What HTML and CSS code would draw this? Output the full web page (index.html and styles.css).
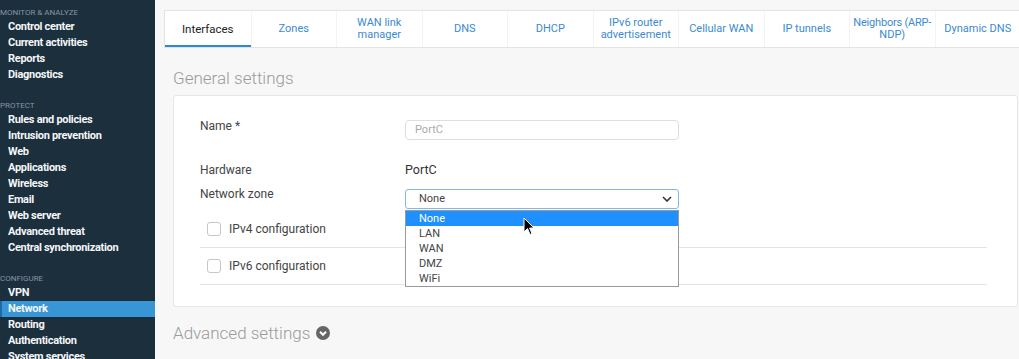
FILE: index.html
```html
<!DOCTYPE html>
<html lang="en">

<head>
    <meta charset="UTF-8">
    <title>Network - Interfaces</title>
    <link rel="stylesheet" href="styles.css">
</head>

<body>
    <nav class="sidebar">
        <div class="nav-group">
            <div class="nav-title">MONITOR &amp; ANALYZE</div>
            <a class="nav-item">Control center</a>
            <a class="nav-item">Current activities</a>
            <a class="nav-item">Reports</a>
            <a class="nav-item">Diagnostics</a>
        </div>
        <div class="nav-group">
            <div class="nav-title">PROTECT</div>
            <a class="nav-item">Rules and policies</a>
            <a class="nav-item">Intrusion prevention</a>
            <a class="nav-item">Web</a>
            <a class="nav-item">Applications</a>
            <a class="nav-item">Wireless</a>
            <a class="nav-item">Email</a>
            <a class="nav-item">Web server</a>
            <a class="nav-item">Advanced threat</a>
            <a class="nav-item">Central synchronization</a>
        </div>
        <div class="nav-group">
            <div class="nav-title">CONFIGURE</div>
            <a class="nav-item">VPN</a>
            <a class="nav-item active">Network</a>
            <a class="nav-item">Routing</a>
            <a class="nav-item">Authentication</a>
            <a class="nav-item">System services</a>
        </div>
    </nav>

    <main class="content">
        <div class="tabs">
            <a class="tab active">Interfaces</a>
            <a class="tab">Zones</a>
            <a class="tab">WAN link manager</a>
            <a class="tab">DNS</a>
            <a class="tab">DHCP</a>
            <a class="tab">IPv6 router advertisement</a>
            <a class="tab">Cellular WAN</a>
            <a class="tab">IP tunnels</a>
            <a class="tab"><span><span class="keep">Neighbors (ARP-</span><br>NDP)</span></a>
            <a class="tab">Dynamic DNS</a>
        </div>

        <div class="page-body">
            <h2 class="section-title">General settings</h2>

            <div class="panel">
                <div class="form-row row-name">
                    <label class="form-label">Name *</label>
                    <div class="field">
                        <div class="text-input placeholder">PortC</div>
                    </div>
                </div>

                <div class="form-row row-hardware">
                    <label class="form-label">Hardware</label>
                    <div class="field value">PortC</div>
                </div>

                <div class="form-row row-zone">
                    <label class="form-label">Network zone</label>
                    <div class="field select-wrap">
                        <div class="select">
                            <span>None</span>
                            <svg class="select-arrow" width="10" height="6" viewBox="0 0 10 6">
                                <path d="M1 1 L5 5 L9 1" fill="none" stroke="#333" stroke-width="1.6" />
                            </svg>
                        </div>
                        <ul class="dropdown">
                            <li class="selected">None</li>
                            <li>LAN</li>
                            <li>WAN</li>
                            <li>DMZ</li>
                            <li>WiFi</li>
                        </ul>
                        <svg class="pointer" width="12" height="19" viewBox="0 0 12 19">
                            <path d="M1 1 L1 15 L4.5 11.5 L7 17.5 L9 16.6 L6.6 11 L11 11 Z" fill="#000" stroke="#fff" stroke-width="1" />
                        </svg>
                    </div>
                </div>

                <div class="check-row">
                    <span class="checkbox"></span>
                    <span>IPv4 configuration</span>
                </div>
                <div class="check-row">
                    <span class="checkbox"></span>
                    <span>IPv6 configuration</span>
                </div>
            </div>

            <h2 class="section-title advanced">
                Advanced settings
                <svg class="toggle-icon" width="14" height="14" viewBox="0 0 14 14">
                    <circle cx="7" cy="7" r="7" fill="#666" />
                    <path d="M4 5.8 L7 8.8 L10 5.8" fill="none" stroke="#fff" stroke-width="2" />
                </svg>
            </h2>
        </div>
    </main>
</body>

</html>
```

FILE: styles.css
```css
body {
    margin: 0;
    width: 1019px;
    height: 359px;
    overflow: hidden;
    display: flex;
    font-family: Roboto, "Liberation Sans", sans-serif;
    background-color: #f7f7f7;
    color: #444;
}

/* sidebar */

.sidebar {
    width: 155px;
    flex-shrink: 0;
    background-color: #1b2f3d;
    padding-top: 6px;
}

.nav-group {
    display: flex;
    flex-direction: column;
    margin-bottom: 16px;
}

.nav-title {
    font-size: 8px;
    line-height: 13px;
    color: #8596a2;
}

.nav-item {
    display: block;
    padding-left: 8px;
    font-size: 11px;
    font-weight: bold;
    line-height: 16px;
    letter-spacing: -0.3px;
    color: #f4f6f8;
    white-space: nowrap;
}

.nav-item.active {
    background-color: #3996d6;
    border-left: 2px solid #1f6aa5;
    padding-left: 6px;
}

/* content */

.content {
    flex: 1;
    padding: 10px 0 0 9px;
    min-width: 0;
}

.tabs {
    display: grid;
    grid-template-columns: repeat(10, 85.5px);
    height: 36px;
    background-color: #fff;
    border: 1px solid #e3e3e3;
    border-right: none;
}

.tab {
    display: flex;
    align-items: center;
    justify-content: center;
    text-align: center;
    padding: 0 2px;
    font-size: 11px;
    line-height: 12px;
    color: #3b8ad0;
    border-left: 1px solid #f3f3f3;
}

.tab .keep {
    white-space: nowrap;
    letter-spacing: -0.2px;
}

.tab:first-child {
    border-left: none;
}

.tab.active {
    color: #222;
    font-size: 11.5px;
    box-shadow: inset 0 -2px 0 #2a8ad8;
}

.page-body {
    padding: 0 1px 0 9px;
}

.section-title {
    margin: 20px 0 7px;
    font-size: 17px;
    font-weight: 300;
    line-height: 20px;
    color: #9a9a9a;
}

.panel {
    position: relative;
    background-color: #fff;
    border: 1px solid #e6e6e6;
    border-radius: 3px;
    padding: 22px 30px 21px 26px;
}

.form-row {
    display: flex;
    align-items: flex-start;
    font-size: 12px;
    line-height: 16px;
}

.form-label {
    width: 205px;
    flex-shrink: 0;
}

.field {
    width: 274px;
}

.row-name .field {
    padding-top: 2px;
}

.row-hardware {
    margin-top: 22px;
}

.row-zone {
    margin-top: 8px;
}

.row-zone .field {
    padding-top: 3px;
}

.text-input {
    box-sizing: border-box;
    height: 20px;
    border: 1px solid #dedede;
    border-radius: 4px;
    padding-left: 9px;
    font-size: 11px;
    line-height: 18px;
}

.placeholder {
    color: #aaa;
}

.value {
    color: #333;
    font-size: 12.5px;
}

.select-wrap {
    position: relative;
}

.select {
    box-sizing: border-box;
    height: 20px;
    display: flex;
    align-items: center;
    justify-content: space-between;
    border: 1px solid #86b6e6;
    border-radius: 3px;
    padding: 0 6px 0 13px;
    font-size: 11px;
    color: #444;
}

.dropdown {
    position: absolute;
    top: 24px;
    left: 0;
    width: 274px;
    box-sizing: border-box;
    margin: 0;
    padding: 0;
    list-style: none;
    background-color: #fff;
    border: 1px solid #9a9a9a;
    z-index: 2;
}

.dropdown li {
    height: 15px;
    line-height: 15px;
    padding-left: 13px;
    font-size: 11px;
    color: #444;
}

.dropdown li.selected {
    background-color: #1e90ff;
    color: #fff;
}

.pointer {
    position: absolute;
    top: 31px;
    left: 118px;
    z-index: 3;
}

.check-row {
    display: flex;
    align-items: center;
    gap: 8px;
    height: 36px;
    margin-top: 2px;
    padding-left: 7px;
    border-bottom: 1px solid #e3e3e3;
    font-size: 12px;
    color: #444;
}

.check-row + .check-row {
    margin-top: 0;
}

.checkbox {
    width: 12px;
    height: 12px;
    border: 1px solid #c6c6c6;
    border-radius: 3px;
}

.section-title.advanced {
    display: flex;
    align-items: center;
    gap: 6px;
    margin-top: 16px;
}
```
